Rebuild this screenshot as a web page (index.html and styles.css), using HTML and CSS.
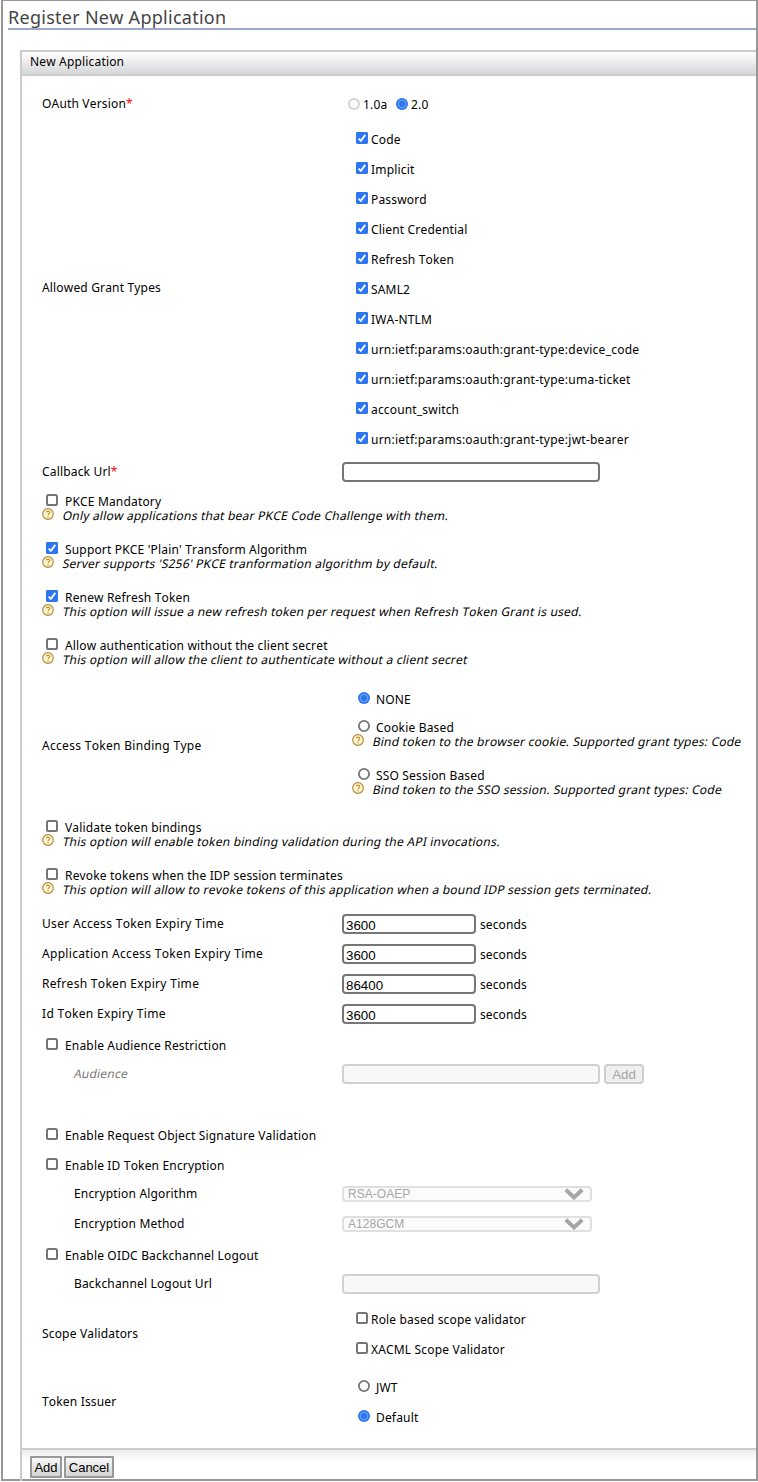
FILE: index.html
```html
<!DOCTYPE html>
<html lang="en">
<head>
<meta charset="utf-8">
<title>Register New Application</title>
<link rel="stylesheet" href="styles.css">
</head>
<body>
<svg class="defs" aria-hidden="true">
  <symbol id="tick" viewBox="0 0 12 12"><rect width="12" height="12" rx="1.4" fill="#2c76f2"/><path d="M2.6 6.6 4.8 8.8 9.3 2.9" fill="none" stroke="#fff" stroke-width="1.8"/></symbol>
  <symbol id="box" viewBox="0 0 12 12"><rect x="1" y="1" width="10" height="10" rx="1.6" fill="#fff" stroke="#767676" stroke-width="2"/></symbol>
  <symbol id="ring" viewBox="0 0 12 12"><circle cx="6" cy="6" r="5.1" fill="#fff" stroke="#767676" stroke-width="1.8"/></symbol>
  <symbol id="ring-off" viewBox="0 0 12 12"><circle cx="6" cy="6" r="5.1" fill="#f8f8f8" stroke="#d0d0d0" stroke-width="1.8"/></symbol>
  <symbol id="dot" viewBox="0 0 12 12"><circle cx="6" cy="6" r="6" fill="#2c76f2"/><circle cx="6" cy="6" r="3.8" fill="none" stroke="#8db6fa" stroke-width=".8"/></symbol>
  <symbol id="help" viewBox="0 0 12 12"><circle cx="6" cy="6" r="5.3" fill="#fffbd6" stroke="#b48a3c" stroke-width="1.2"/><path d="M4.2 4.6C4.2 2.5 7.8 2.5 7.8 4.6 7.8 5.8 6 5.8 6 7.2M6 8.1V9.4" fill="none" stroke="#d98a2b" stroke-width="1.2"/></symbol>
  <symbol id="chevron" viewBox="0 0 20 12"><path d="M1.8 1.8 10 9.4 18.2 1.8" fill="none" stroke="#a6a6a6" stroke-width="4"/></symbol>
</svg>
<main class="frame">
  <h1 class="title"><span>Register New Application</span></h1>
  <section class="panel">
    <h2 class="panel-head">New Application</h2>
    <div class="body">
      <div class="row first"><span class="label">OAuth Version<b class="req">*</b></span><span class="value versions"><svg class="ic"><use href="#ring-off"/></svg><span class="v1">1.0a</span><svg class="ic"><use href="#dot"/></svg><span>2.0</span></span></div>
      <div class="row grants"><span class="label">Allowed Grant Types</span>
        <div class="value list">
          <label class="opt"><svg class="ic"><use href="#tick"/></svg><span>Code</span></label>
          <label class="opt"><svg class="ic"><use href="#tick"/></svg><span>Implicit</span></label>
          <label class="opt"><svg class="ic"><use href="#tick"/></svg><span>Password</span></label>
          <label class="opt"><svg class="ic"><use href="#tick"/></svg><span>Client Credential</span></label>
          <label class="opt"><svg class="ic"><use href="#tick"/></svg><span>Refresh Token</span></label>
          <label class="opt"><svg class="ic"><use href="#tick"/></svg><span>SAML2</span></label>
          <label class="opt"><svg class="ic"><use href="#tick"/></svg><span>IWA-NTLM</span></label>
          <label class="opt urn"><svg class="ic"><use href="#tick"/></svg><span>urn:ietf:params:oauth:grant-type:device_code</span></label>
          <label class="opt urn"><svg class="ic"><use href="#tick"/></svg><span>urn:ietf:params:oauth:grant-type:uma-ticket</span></label>
          <label class="opt"><svg class="ic"><use href="#tick"/></svg><span>account_switch</span></label>
          <label class="opt urn"><svg class="ic"><use href="#tick"/></svg><span>urn:ietf:params:oauth:grant-type:jwt-bearer</span></label>
        </div>
      </div>
      <div class="row callback"><span class="label">Callback Url<b class="req">*</b></span><input class="field wide" type="text"></div>

      <div class="check-help"><label class="line"><svg class="ic"><use href="#box"/></svg><span>PKCE Mandatory</span></label><div class="hint"><svg class="ic"><use href="#help"/></svg><span class="slant">Only allow applications that bear PKCE Code Challenge with them.</span></div></div>
      <div class="check-help"><label class="line"><svg class="ic"><use href="#tick"/></svg><span>Support PKCE 'Plain' Transform Algorithm</span></label><div class="hint"><svg class="ic"><use href="#help"/></svg><span class="slant">Server supports 'S256' PKCE tranformation algorithm by default.</span></div></div>
      <div class="check-help"><label class="line"><svg class="ic"><use href="#tick"/></svg><span>Renew Refresh Token</span></label><div class="hint"><svg class="ic"><use href="#help"/></svg><span class="slant">This option will issue a new refresh token per request when Refresh Token Grant is used.</span></div></div>
      <div class="check-help"><label class="line"><svg class="ic"><use href="#box"/></svg><span>Allow authentication without the client secret</span></label><div class="hint"><svg class="ic"><use href="#help"/></svg><span class="slant">This option will allow the client to authenticate without a client secret</span></div></div>

      <div class="row binding loose"><span class="label">Access Token Binding Type</span>
        <div class="value bindings">
          <label class="line none"><svg class="ic"><use href="#dot"/></svg><span>NONE</span></label>
          <label class="line"><svg class="ic"><use href="#ring"/></svg><span>Cookie Based</span></label>
          <div class="hint cookie-hint"><svg class="ic"><use href="#help"/></svg><span class="slant">Bind token to the browser cookie. Supported grant types: Code</span></div>
          <label class="line"><svg class="ic"><use href="#ring"/></svg><span>SSO Session Based</span></label>
          <div class="hint"><svg class="ic"><use href="#help"/></svg><span class="slant">Bind token to the SSO session. Supported grant types: Code</span></div>
        </div>
      </div>

      <div class="check-help"><label class="line"><svg class="ic"><use href="#box"/></svg><span>Validate token bindings</span></label><div class="hint"><svg class="ic"><use href="#help"/></svg><span class="slant">This option will enable token binding validation during the API invocations.</span></div></div>
      <div class="check-help"><label class="line"><svg class="ic"><use href="#box"/></svg><span>Revoke tokens when the IDP session terminates</span></label><div class="hint"><svg class="ic"><use href="#help"/></svg><span class="slant">This option will allow to revoke tokens of this application when a bound IDP session gets terminated.</span></div></div>

      <div class="row loose"><span class="label">User Access Token Expiry Time</span><input class="field" type="text" value="3600"><span class="unit">seconds</span></div>
      <div class="row loose"><span class="label">Application Access Token Expiry Time</span><input class="field" type="text" value="3600"><span class="unit">seconds</span></div>
      <div class="row loose"><span class="label">Refresh Token Expiry Time</span><input class="field" type="text" value="86400"><span class="unit">seconds</span></div>
      <div class="row loose"><span class="label">Id Token Expiry Time</span><input class="field" type="text" value="3600"><span class="unit">seconds</span></div>

      <div class="row"><label class="line"><svg class="ic"><use href="#box"/></svg><span>Enable Audience Restriction</span></label></div>
      <div class="row audience"><span class="label sub"><span class="slant muted">Audience</span></span><input class="field wide" type="text" disabled><button class="add-off" disabled>Add</button></div>
      <div class="row"><label class="line"><svg class="ic"><use href="#box"/></svg><span>Enable Request Object Signature Validation</span></label></div>
      <div class="row"><label class="line"><svg class="ic"><use href="#box"/></svg><span>Enable ID Token Encryption</span></label></div>
      <div class="row"><span class="label sub">Encryption Algorithm</span><span class="select"><span>RSA-OAEP</span><svg class="chev"><use href="#chevron"/></svg></span></div>
      <div class="row"><span class="label sub">Encryption Method</span><span class="select"><span>A128GCM</span><svg class="chev"><use href="#chevron"/></svg></span></div>
      <div class="row"><label class="line"><svg class="ic"><use href="#box"/></svg><span>Enable OIDC Backchannel Logout</span></label></div>
      <div class="row"><span class="label sub">Backchannel Logout Url</span><input class="field wide" type="text" disabled></div>

      <div class="row scopes"><span class="label">Scope Validators</span>
        <div class="value list">
          <label class="opt"><svg class="ic"><use href="#box"/></svg><span>Role based scope validator</span></label>
          <label class="opt"><svg class="ic"><use href="#box"/></svg><span>XACML Scope Validator</span></label>
        </div>
      </div>
      <div class="row issuers"><span class="label">Token Issuer</span>
        <div class="value list radios">
          <label class="opt"><svg class="ic"><use href="#ring"/></svg><span>JWT</span></label>
          <label class="opt"><svg class="ic"><use href="#dot"/></svg><span>Default</span></label>
        </div>
      </div>
    </div>
    <footer class="actions"><button>Add</button><button class="cancel">Cancel</button></footer>
  </section>
</main>
</body>
</html>
```
FILE: styles.css
```css
* { box-sizing: border-box; }
body {
  margin: 0;
  background: #fff;
  color: #000;
  font: 12px/14px "Noto Sans", "Open Sans", sans-serif;
  font-kerning: none;
  letter-spacing: 0.17px;
  overflow: hidden;
}
.defs { display: none; }
.frame {
  height: 1481px;
  margin-left: 1px;
  border: solid #979797;
  border-width: 1px 2px 2px;
  padding-left: 5px;
}
.title {
  height: 29px;
  margin: 0;
  border-bottom: 2px solid #9aa8c9;
  color: #444;
  font-size: 18px;
  font-weight: 400;
  letter-spacing: 0.27px;
  line-height: 33px;
  white-space: nowrap;
}
.panel {
  height: 1432px;
  margin: 20px 0 0 12px;
  border: 2px solid #ccc;
  border-width: 2px 0 0 2px;
}
.panel-head {
  height: 24px;
  margin: 0;
  padding-left: 8px;
  border-bottom: 2px solid #ccc;
  background: linear-gradient(#fff, #d5d6d8);
  font-size: 12px;
  font-weight: 400;
  line-height: 19px;
}
.body {
  height: 1374px;
  padding: 13px 0 0 20px;
  border-bottom: 2px solid #ccc;
}
.row {
  display: flex;
  align-items: center;
  height: 30px;
  white-space: nowrap;
}
.label {
  width: 300px;
  padding-bottom: 1px;
}
.loose > .label { letter-spacing: 0.31px; }
.urn { letter-spacing: 0.24px; }
.sub { padding-left: 32px; }
.slant {
  display: inline-block;
  transform: skewX(-12deg);
  letter-spacing: 0.22px;
}
.muted { color: #777; }
.req { color: #f00; font-weight: 400; }
.ic { flex: none; width: 12px; height: 12px; }
.versions {
  display: flex;
  align-items: center;
  padding-left: 6px;
}
.versions span { margin-left: 3px; padding-top: 1px; }
.versions .v1 { width: 33px; }
.grants { height: 330px; margin-top: 5px; }
.grants > .label { padding-bottom: 3px; }
.list { padding-left: 14px; }
.opt {
  display: flex;
  align-items: center;
  gap: 3px;
  height: 30px;
}
.opt .ic, .line .ic { margin-bottom: 2px; }
.opt span, .line span { padding-top: 2px; }
.callback { margin-top: 3px; }
.line {
  display: flex;
  align-items: center;
  gap: 7px;
  height: 14px;
  padding-left: 4px;
}
.row > .line { height: 16px; padding-top: 2px; }
.check-help {
  height: 48px;
  padding-top: 7px;
  white-space: nowrap;
}
.hint {
  display: flex;
  align-items: center;
  gap: 9px;
  height: 14px;
}
.hint .ic { margin-bottom: 2px; }
.hint .slant { padding-top: 2px; }
.binding { height: 134px; }
.bindings { padding: 0 0 4px 10px; }
.bindings .line { padding-left: 6px; gap: 6px; }
.bindings .none { margin-bottom: 14px; }
.bindings .cookie-hint { margin-bottom: 20px; }
.field {
  width: 134px;
  height: 20px;
  padding: 2px 2px 0;
  border: 2px solid #767676;
  border-radius: 4px;
  background: #fff;
  color: #000;
  font: 13.33px "Liberation Sans", Arial, sans-serif;
}
.wide { width: 258px; }
.field:disabled { border-color: #d1d1d1; background: #f8f8f8; }
.unit { margin-left: 4px; padding-top: 1px; letter-spacing: 0.1px; }
.audience { margin-bottom: 30px; }
.add-off {
  width: 40px;
  height: 20px;
  margin-left: 4px;
  padding: 2px 0 0;
  border: 2px solid #cfcfcf;
  border-radius: 4px;
  background: #efefef;
  color: #a6a6a6;
  font: 13.33px/14px "Liberation Sans", Arial, sans-serif;
}
.select {
  display: flex;
  align-items: center;
  justify-content: space-between;
  width: 250px;
  height: 16px;
  padding: 0 6px 0 4px;
  border: 2px solid #e0e0e0;
  border-radius: 4px;
  background: #fbfbfb;
  color: #a6a6a6;
  font: 12px/12px "Liberation Sans", Arial, sans-serif;
  letter-spacing: 0.05px;
}
.chev { width: 20px; height: 12px; }
.scopes { height: 60px; margin-top: 5px; }
.issuers { height: 60px; margin-top: 8px; }
.radios { padding-left: 16px; }
.radios .opt { gap: 6px; }
.actions {
  display: flex;
  gap: 2px;
  height: 29px;
  padding: 6px 0 0 8px;
  background: linear-gradient(#eee, #fff 12px);
}
.actions button {
  width: 32px;
  height: 22px;
  padding: 2px 0 0;
  border: 2px solid #999;
  border-radius: 1px;
  background: linear-gradient(#f8f8f8, #d4d4d4);
  color: #000;
  font: 13px/16px "Liberation Sans", Arial, sans-serif;
}
.actions .cancel { width: 50px; }
```
